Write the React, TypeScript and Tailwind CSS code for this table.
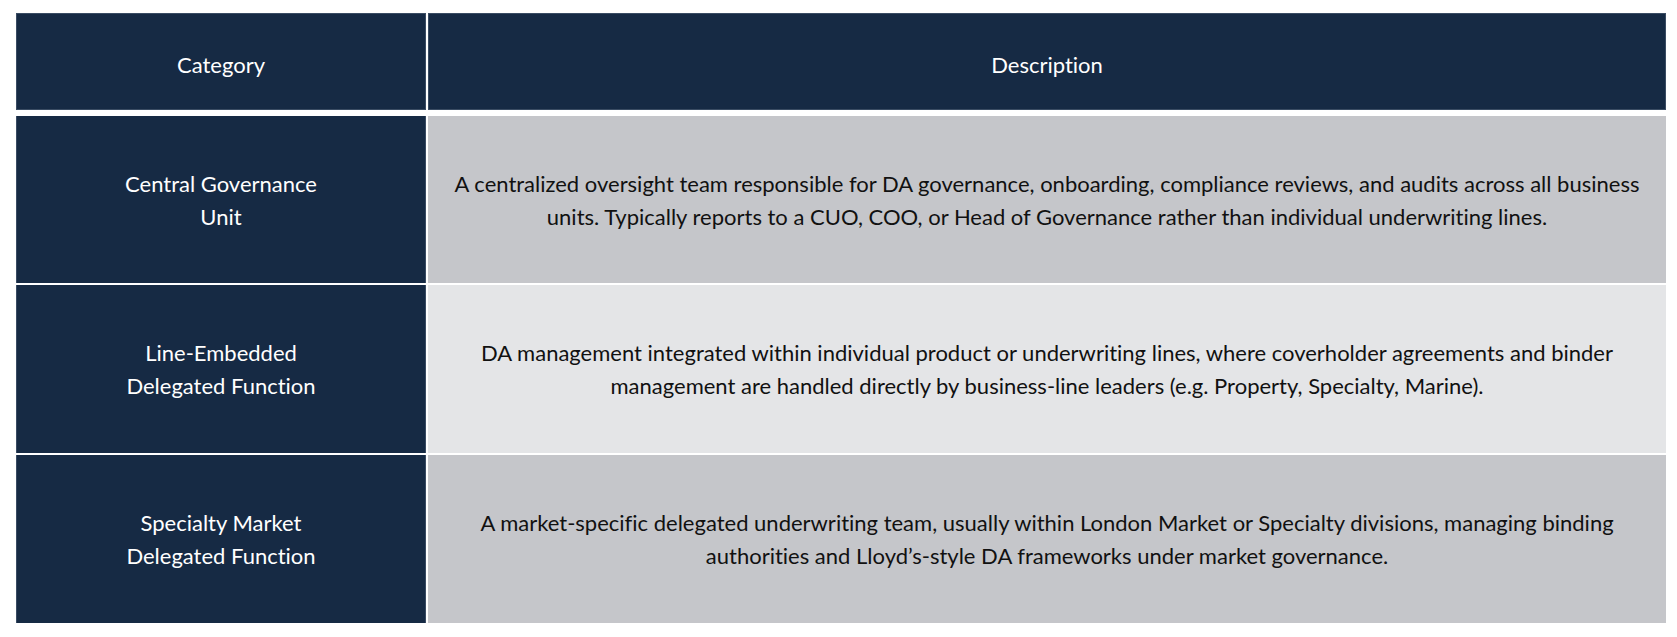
const rows = [
  {
    category: ['Central Governance', 'Unit'],
    description: [
      'A centralized oversight team responsible for DA governance, onboarding, compliance reviews, and audits across all business',
      'units. Typically reports to a CUO, COO, or Head of Governance rather than individual underwriting lines.',
    ],
    tone: 'bg-[#c5c6ca]',
    height: 'h-[167px]',
  },
  {
    category: ['Line-Embedded', 'Delegated Function'],
    description: [
      'DA management integrated within individual product or underwriting lines, where coverholder agreements and binder',
      'management are handled directly by business-line leaders (e.g. Property, Specialty, Marine).',
    ],
    tone: 'bg-[#e4e5e7]',
    height: 'h-[168px]',
  },
  {
    category: ['Specialty Market', 'Delegated Function'],
    description: [
      'A market-specific delegated underwriting team, usually within London Market or Specialty divisions, managing binding',
      'authorities and Lloyd\u2019s-style DA frameworks under market governance.',
    ],
    tone: 'bg-[#c5c6ca]',
    height: 'h-[168px]',
  },
];

export default function App() {
  return (
    <div className="w-[1677px] h-[637px] bg-white pl-4 pt-[13px] font-['Lato',sans-serif] text-[22px] leading-[33px] [font-variant-ligatures:none]">
      <div className="w-[1650px] flex flex-col">
        <div className="flex gap-[2px] h-[97px]">
          <div className="w-[410px] bg-[#162a44] border border-[#3a4c63] flex items-center justify-center pt-[5px] text-white">
            Category
          </div>
          <div className="flex-1 bg-[#162a44] border border-[#3a4c63] flex items-center justify-center pt-[5px] text-white">
            Description
          </div>
        </div>

        <div className="flex flex-col gap-[2px] mt-[6px]">
          {rows.map((row) => (
            <div key={row.category.join(' ')} className={`flex gap-[2px] ${row.height}`}>
              <div className="w-[410px] bg-[#162a44] border-x border-[#3a4c63] flex flex-col items-center justify-center text-white text-center">
                {row.category.map((line) => (
                  <span key={line}>{line}</span>
                ))}
              </div>
              <div className={`flex-1 ${row.tone} flex flex-col items-center justify-center text-[#111] text-center px-4`}>
                {row.description.map((line) => (
                  <span key={line} className="whitespace-nowrap">{line}</span>
                ))}
              </div>
            </div>
          ))}
        </div>
      </div>
    </div>
  );
}
